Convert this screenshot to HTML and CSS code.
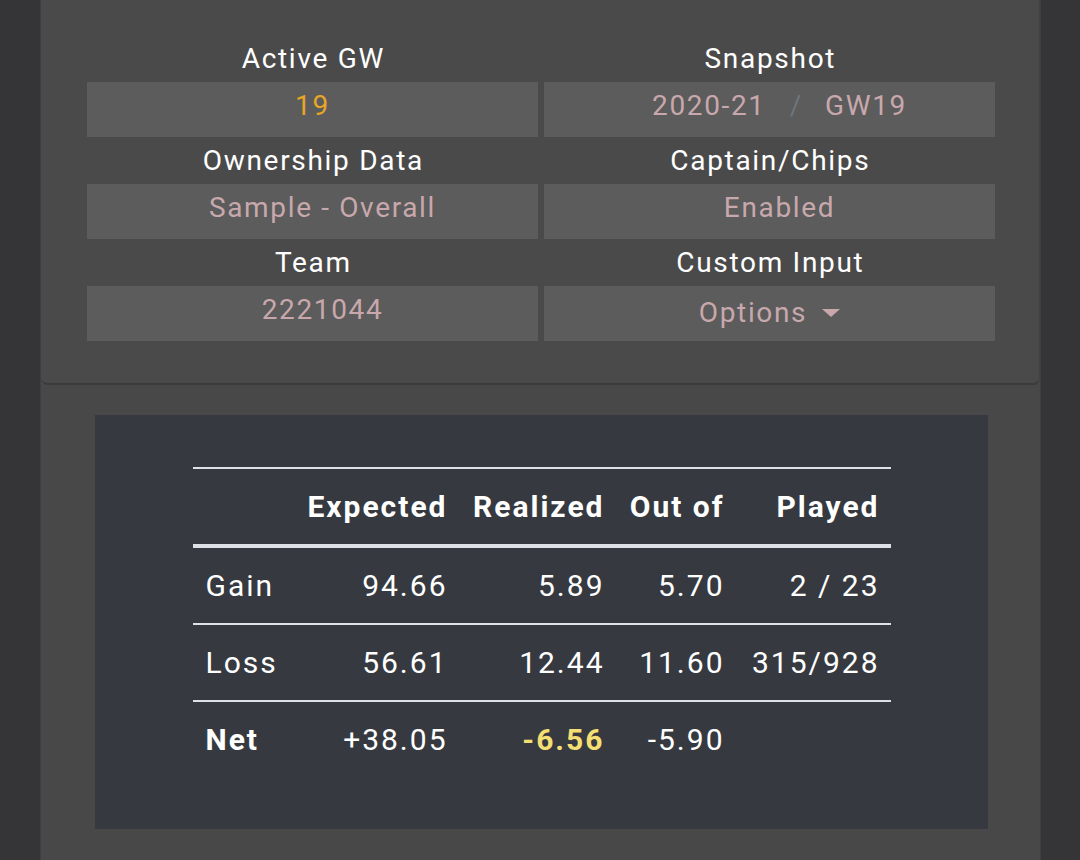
FILE: index.html
```html
<!DOCTYPE html>
<html>
<head>
<meta charset="utf-8">
<link rel="stylesheet" href="styles.css">
</head>
<body>
<div class="page">
  <div class="card">
    <div class="grid">
      <div class="group">
        <div class="label">Active GW</div>
        <div class="cell"><span class="val gw">19</span></div>
      </div>
      <div class="group">
        <div class="label">Snapshot</div>
        <div class="cell shift"><span class="val">2020-21</span><span class="slash">/</span><span class="val">GW19</span></div>
      </div>
      <div class="group">
        <div class="label">Ownership Data</div>
        <div class="cell shift"><span class="val">Sample - Overall</span></div>
      </div>
      <div class="group">
        <div class="label">Captain/Chips</div>
        <div class="cell shift"><span class="val">Enabled</span></div>
      </div>
      <div class="group">
        <div class="label">Team</div>
        <div class="cell shift"><span class="val">2221044</span></div>
      </div>
      <div class="group">
        <div class="label">Custom Input</div>
        <div class="cell opts"><span class="val">Options</span><span class="caret"></span></div>
      </div>
    </div>
  </div>
  <div class="stats">
    <table class="tbl">
      <colgroup>
        <col class="c1"><col class="c2"><col class="c3"><col class="c4"><col class="c5">
      </colgroup>
      <thead>
        <tr><th class="left"></th><th>Expected</th><th>Realized</th><th>Out of</th><th>Played</th></tr>
      </thead>
      <tbody>
        <tr><td class="left">Gain</td><td>94.66</td><td>5.89</td><td>5.70</td><td>2 / 23</td></tr>
        <tr><td class="left">Loss</td><td>56.61</td><td>12.44</td><td>11.60</td><td>315/928</td></tr>
        <tr class="net"><td class="left b">Net</td><td>+38.05</td><td class="b hl">-6.56</td><td>-5.90</td><td></td></tr>
      </tbody>
    </table>
  </div>
</div>
</body>
</html>
```
FILE: styles.css
```css
html, body {
  margin: 0;
  padding: 0;
}
body {
  background: #353537;
  font-family: Roboto, "Liberation Sans", sans-serif;
  color: #fff;
  height: 860px;
  overflow: hidden;
}
.page {
  margin-left: 40px;
  width: 1001px;
  height: 860px;
  background: #484848;
  border-right: 1px solid #3e3f42;
  border-left: 1px solid #3e3f42;
  box-sizing: border-box;
}
.card {
  background: #4a4a4a;
  padding: 35px 45px 42px 46px;
  border-radius: 0 0 7px 7px;
  border-bottom: 2px solid #3b3b3e;
  border-right: 1px solid #404144;
}
.grid {
  display: grid;
  grid-template-columns: 451px 451px;
  column-gap: 6px;
}
.label {
  height: 47px;
  line-height: 47px;
  text-align: center;
  font-size: 28px;
  letter-spacing: 1.7px;
  text-indent: 1.7px;
  color: #fff;
}
.cell {
  height: 55px;
  background: #5b5c5b;
  display: flex;
  justify-content: center;
  align-items: center;
  padding-bottom: 8px;
  box-sizing: border-box;
  font-size: 28px;
  letter-spacing: 1.65px;
}
.cell.shift {
  padding-left: 20px;
}
.cell.opts {
  padding-bottom: 2px;
}
.val {
  color: #c8a8ad;
}
.val.gw {
  color: #e8a526;
}
.slash {
  color: #6c757d;
  margin: 0 22px 0 24px;
}
.caret {
  display: inline-block;
  width: 0;
  height: 0;
  margin-left: 15px;
  border-top: 8px solid #c8a8ad;
  border-left: 9px solid transparent;
  border-right: 9px solid transparent;
}
.stats {
  margin: 30px 52px 0 54px;
  background: #363a40;
  padding: 52px 0 52px;
}
.tbl {
  margin: 0 auto;
  width: 698px;
  border-collapse: collapse;
  font-size: 30px;
  letter-spacing: 2px;
  table-layout: fixed;
}
.c1 { width: 100px; }
.c2 { width: 166px; }
.c3 { width: 157px; }
.c4 { width: 120px; }
.c5 { width: 155px; }
.tbl th, .tbl td {
  padding: 17px 11px 17px 13px;
  line-height: 41px;
  text-align: right;
  white-space: nowrap;
  color: #fff;
}
.tbl th {
  font-weight: 700;
  border-top: 2px solid #dee2e6;
  border-bottom: 4px solid #dee2e6;
}
.tbl td {
  border-top: 2px solid #dee2e6;
}
.tbl tbody tr:first-child td {
  border-top: none;
}
.tbl .left {
  text-align: left;
}
.tbl .b {
  font-weight: 700;
}
.tbl .hl {
  color: #f3df72;
}
```
